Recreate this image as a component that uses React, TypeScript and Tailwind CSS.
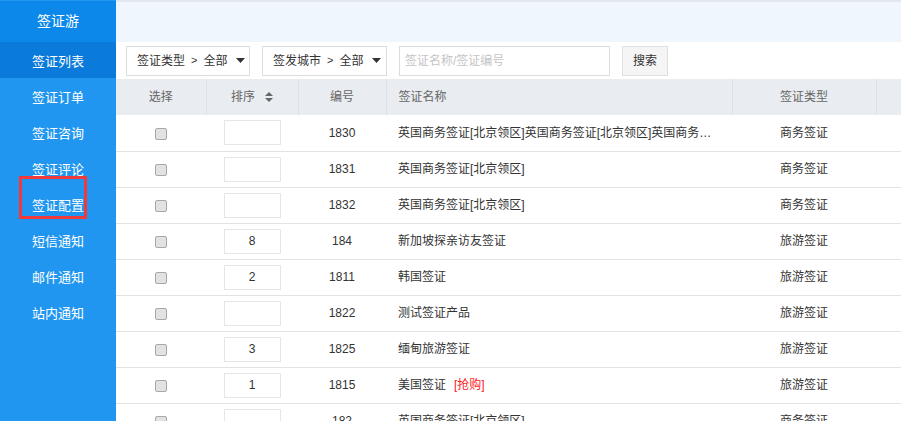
import React from "react";

const menus = ["签证列表", "签证订单", "签证咨询", "签证评论", "签证配置", "短信通知", "邮件通知", "站内通知"];

const rows = [
  { sort: "", id: "1830", name: "英国商务签证[北京领区]英国商务签证[北京领区]英国商务签证[北京领区]", type: "商务签证" },
  { sort: "", id: "1831", name: "英国商务签证[北京领区]", type: "商务签证" },
  { sort: "", id: "1832", name: "英国商务签证[北京领区]", type: "商务签证" },
  { sort: "8", id: "184", name: "新加坡探亲访友签证", type: "旅游签证" },
  { sort: "2", id: "1811", name: "韩国签证", type: "旅游签证" },
  { sort: "", id: "1822", name: "测试签证产品", type: "旅游签证" },
  { sort: "3", id: "1825", name: "缅甸旅游签证", type: "旅游签证" },
  { sort: "1", id: "1815", name: "美国签证", tag: "[抢购]", type: "旅游签证" },
  { sort: "", id: "182", name: "英国商务签证[北京领区]", type: "商务签证" },
];

const Caret = () => (
  <svg width="9" height="5" viewBox="0 0 9 5" className="ml-[9px] shrink-0">
    <path d="M0 0 L9 0 L4.5 5 Z" fill="#333" />
  </svg>
);

const App = () => {
  return (
    <div
      className="flex h-[421px] w-[901px] overflow-hidden bg-white text-[12px] text-[#333]"
      style={{ fontFamily: '"Liberation Sans", "Noto Sans CJK SC", sans-serif' }}
    >
      {/* sidebar */}
      <div className="flex w-[116px] shrink-0 flex-col bg-[#2196f0] pt-px text-white">
        <div className="flex h-[41px] items-center justify-center bg-[#0b88e9] text-[14px]">签证游</div>
        {menus.map((m, i) => (
          <div
            key={m}
            className={
              "relative flex h-[36px] items-center justify-center pt-[3px] text-[13px] " +
              (i === 0 ? "bg-[#0a7bdb]" : "")
            }
          >
            {m}
            {m === "签证配置" && (
              <span className="absolute left-[19px] top-[-10px] h-[43px] w-[68px] border-[3px] border-[#f0393a]"></span>
            )}
          </div>
        ))}
      </div>

      {/* main */}
      <div className="flex min-w-0 flex-1 flex-col">
        <div className="h-[42px] shrink-0 border-t-2 border-[#e3e8ef] bg-[#f0f6fe]"></div>
        <div className="flex h-[37px] shrink-0 items-center gap-3 whitespace-nowrap px-[10px]">
          <div className="flex h-[30px] w-[124px] items-center border border-[#dcdcdc] px-[10px] text-[12px]">
            签证类型<span className="mx-[6px] text-[11px]">&gt;</span>全部
            <Caret />
          </div>
          <div className="flex h-[30px] w-[125px] items-center border border-[#dcdcdc] px-[10px] text-[12px]">
            签发城市<span className="mx-[6px] text-[11px]">&gt;</span>全部
            <Caret />
          </div>
          <div className="flex h-[30px] w-[211px] items-center border border-[#dcdcdc] px-[5px] text-[12px] text-[#c4c4c4]">
            签证名称/签证编号
          </div>
          <div className="flex h-[30px] w-[46px] items-center justify-center border border-[#e0e0e0] bg-[#f5f5f5] text-[12px]">
            搜索
          </div>
        </div>

        <table className="w-[785px] table-fixed border-collapse">
          <colgroup>
            <col className="w-[90px]" />
            <col className="w-[92px]" />
            <col className="w-[88px]" />
            <col className="w-[346px]" />
            <col className="w-[144px]" />
            <col className="w-[25px]" />
          </colgroup>
          <thead>
            <tr className="h-[36px] bg-[#e9ecf0] text-[12px] text-[#666]">
              <th className="border-r border-[#dde1e6] font-normal">选择</th>
              <th className="border-r border-[#dde1e6] font-normal">
                <span className="inline-flex items-center">
                  排序
                  <svg width="8" height="10" viewBox="0 0 8 10" className="ml-[10px]">
                    <path d="M0 4 L4 0 L8 4 Z M0 6 L8 6 L4 10 Z" fill="#666" />
                  </svg>
                </span>
              </th>
              <th className="border-r border-[#dde1e6] font-normal">编号</th>
              <th className="border-r border-[#dde1e6] pl-3 text-left font-normal">签证名称</th>
              <th className="border-r border-[#dde1e6] font-normal">签证类型</th>
              <th></th>
            </tr>
          </thead>
          <tbody>
            {rows.map((r) => (
              <tr key={r.id} className="h-[36px] border-b border-[#e3e3e3]">
                <td className="text-center">
                  <span className="inline-block h-[12px] w-[12px] rounded-[2px] border border-[#a8a8a8] bg-[#e2e2e2] align-middle"></span>
                </td>
                <td className="text-center">
                  <div className="mx-auto flex h-[25px] w-[57px] items-center justify-center border border-[#e6e6e6]">
                    {r.sort}
                  </div>
                </td>
                <td className="text-center">{r.id}</td>
                <td className="truncate pl-3 pr-[18px]">
                  {r.name}
                  {r.tag && <span className="ml-[8px] text-[#ff1a1a]">{r.tag}</span>}
                </td>
                <td className="text-center">{r.type}</td>
                <td></td>
              </tr>
            ))}
          </tbody>
        </table>
      </div>
    </div>
  );
};

export default App;
